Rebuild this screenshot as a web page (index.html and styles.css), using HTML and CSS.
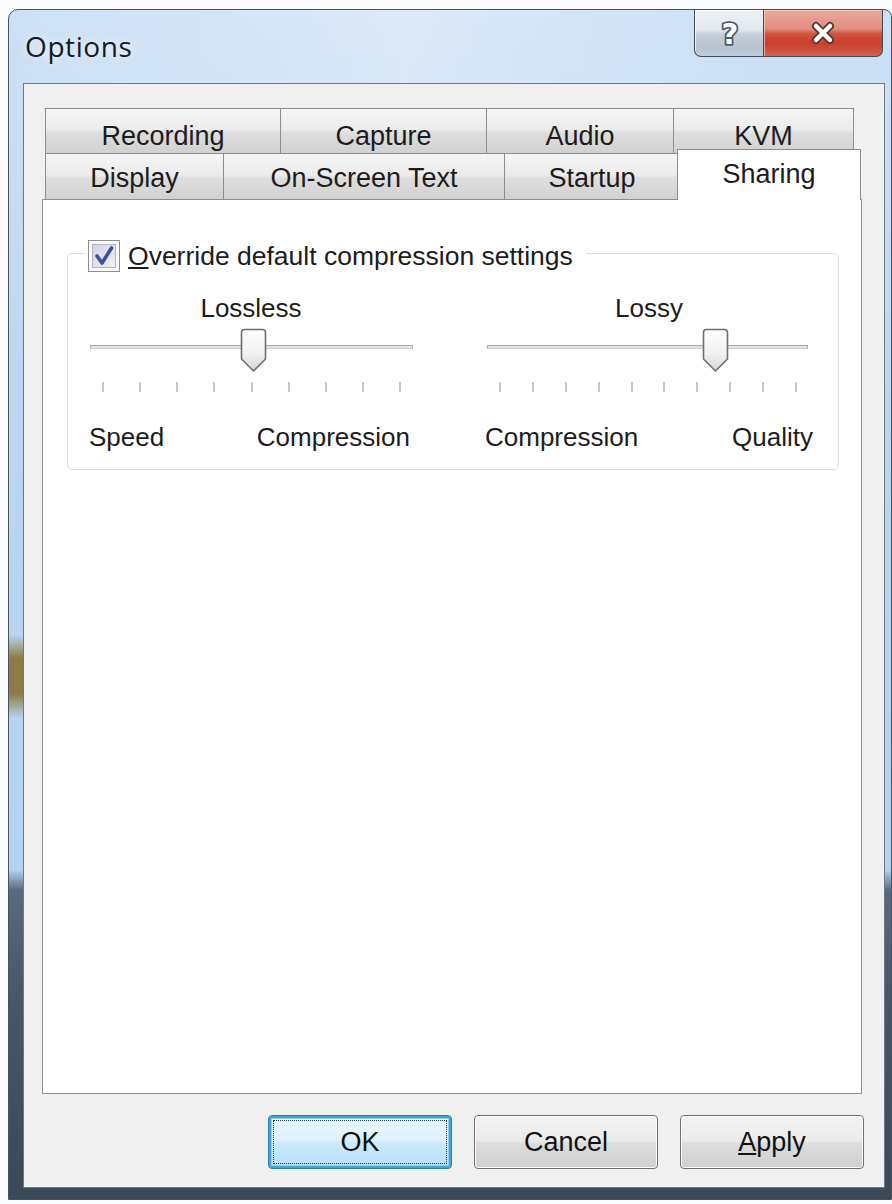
FILE: index.html
```html
<!DOCTYPE html>
<html lang="en">
<head>
<meta charset="utf-8">
<title>Options</title>
<link rel="stylesheet" href="styles.css">
</head>
<body>
<div class="window">
  <div class="titlebar">
    <div class="title">Options</div>
    <div class="caption">
      <div class="cap-btn help">
        <svg width="30" height="34" viewBox="0 0 30 34"><text x="16" y="28" text-anchor="middle" class="help-glyph">?</text></svg>
      </div>
      <div class="cap-btn close">
        <svg width="26" height="24" viewBox="0 0 26 24">
          <path d="M6 5 L20 19 M20 5 L6 19" stroke="#5b3430" stroke-width="8" stroke-linecap="round" fill="none"/>
          <path d="M6 5 L20 19 M20 5 L6 19" stroke="#ffffff" stroke-width="4.5" stroke-linecap="round" fill="none"/>
        </svg>
      </div>
    </div>
  </div>
  <div class="client">
    <div class="tabrow row1">
      <div class="tab t-recording">Recording</div>
      <div class="tab t-capture">Capture</div>
      <div class="tab t-audio">Audio</div>
      <div class="tab t-kvm">KVM</div>
    </div>
    <div class="tabrow row2">
      <div class="tab t-display">Display</div>
      <div class="tab t-onscreen">On-Screen Text</div>
      <div class="tab t-startup">Startup</div>
      <div class="tab t-sharing selected">Sharing</div>
    </div>
    <div class="panel">
      <div class="group">
        <div class="legend">
          <span class="checkbox">
            <svg width="32" height="32" viewBox="0 0 32 32">
              <defs>
                <linearGradient id="cbg" x1="0" y1="0" x2="1" y2="1">
                  <stop offset="0" stop-color="#cfd3e3"/>
                  <stop offset="1" stop-color="#f1f2f8"/>
                </linearGradient>
              </defs>
              <rect x="0.5" y="0.5" width="31" height="31" fill="#fafafa" stroke="#8e8f8f"/>
              <rect x="4.5" y="4.5" width="23" height="23" fill="url(#cbg)" stroke="#aeb4c4"/>
              <path d="M9 16 L14 23 L23.5 8" fill="none" stroke="#3a4fa4" stroke-width="3.6" stroke-linecap="round" stroke-linejoin="round"/>
            </svg>
          </span>
          <span class="legend-text"><u>O</u>verride default compression settings</span>
        </div>
        <div class="sliders">
          <div class="col col-left">
            <div class="slider-title">Lossless</div>
            <div class="slider">
              <div class="track"></div>
              <div class="ticks"><i></i><i></i><i></i><i></i><i></i><i></i><i></i><i></i><i></i></div>
              <div class="thumb" style="left:151px">
                <svg width="27" height="45" viewBox="0 0 27 45">
                  <defs>
                    <linearGradient id="tg1" x1="0" y1="0" x2="0" y2="1">
                      <stop offset="0" stop-color="#fefefe"/>
                      <stop offset="0.6" stop-color="#f0f0f0"/>
                      <stop offset="1" stop-color="#d6d6d6"/>
                    </linearGradient>
                  </defs>
                  <path d="M4.5 1.5 H22.5 Q25.5 1.5 25.5 4.5 V31 L13.5 43 L1.5 31 V4.5 Q1.5 1.5 4.5 1.5 Z" fill="url(#tg1)" stroke="#6e6e6e" stroke-width="1.6" stroke-linejoin="round"/>
                </svg>
              </div>
            </div>
            <div class="ends"><span>Speed</span><span>Compression</span></div>
          </div>
          <div class="col col-right">
            <div class="slider-title">Lossy</div>
            <div class="slider">
              <div class="track"></div>
              <div class="ticks"><i></i><i></i><i></i><i></i><i></i><i></i><i></i><i></i><i></i><i></i></div>
              <div class="thumb" style="left:217px">
                <svg width="27" height="45" viewBox="0 0 27 45">
                  <defs>
                    <linearGradient id="tg2" x1="0" y1="0" x2="0" y2="1">
                      <stop offset="0" stop-color="#fefefe"/>
                      <stop offset="0.6" stop-color="#f0f0f0"/>
                      <stop offset="1" stop-color="#d6d6d6"/>
                    </linearGradient>
                  </defs>
                  <path d="M4.5 1.5 H22.5 Q25.5 1.5 25.5 4.5 V31 L13.5 43 L1.5 31 V4.5 Q1.5 1.5 4.5 1.5 Z" fill="url(#tg2)" stroke="#6e6e6e" stroke-width="1.6" stroke-linejoin="round"/>
                </svg>
              </div>
            </div>
            <div class="ends"><span>Compression</span><span>Quality</span></div>
          </div>
        </div>
      </div>
    </div>
    <div class="buttons">
      <button class="btn default">OK</button>
      <button class="btn">Cancel</button>
      <button class="btn"><u>A</u>pply</button>
    </div>
  </div>
</div>
</body>
</html>
```
FILE: styles.css
```css
html, body {
  margin: 0;
  padding: 0;
}

body {
  width: 892px;
  height: 1204px;
  overflow: hidden;
  background: #fbfcfd;
  font-family: "Liberation Sans", Arial, sans-serif;
  color: #1c1c1c;
}

.window {
  box-sizing: border-box;
  margin: 9px 0 0 8px;
  width: 884px;
  height: 1191px;
  border: 1px solid #46525f;
  border-radius: 10px 8px 0 0;
  padding: 0 6px 11px 14px;
  background:
    linear-gradient(to right, rgba(255,255,255,0) 0, rgba(255,255,255,0.3) 45%, rgba(255,255,255,0) 85%) left top / 100% 74px no-repeat,
    linear-gradient(to bottom, rgba(140,125,70,0) 625px, #8c7d47 648px, #8c7d47 684px, rgba(140,125,70,0) 708px) left top / 14px 100% no-repeat,
    linear-gradient(180deg, #cde0f5 0, #c9def4 120px, #bcd6f0 400px, #b4d1ef 860px, #5a6a7d 880px, #475565 1000px, #3b4856 100%);
}

/* ---------- title bar ---------- */
.titlebar {
  display: flex;
  align-items: flex-start;
  height: 73px;
}

.title {
  margin: 19px 0 0 2px;
  font-family: "Open Sans", "Liberation Sans", sans-serif;
  font-size: 28px;
  line-height: 34px;
  letter-spacing: 0.6px;
  color: #151a20;
  text-shadow: 0 0 8px rgba(255,255,255,0.9);
}

.caption {
  display: flex;
  margin-left: auto;
  margin-right: 2px;
  height: 47px;
}

.cap-btn {
  box-sizing: border-box;
  height: 47px;
  display: flex;
  align-items: center;
  justify-content: center;
  border-bottom: 1px solid #3d4a58;
}

.help {
  width: 70px;
  border-left: 1px solid #3d4a58;
  border-right: 1px solid #3d4a58;
  border-bottom-left-radius: 7px;
  background: linear-gradient(180deg, #eef2f6 0, #e2e8ef 44%, #c6cfda 52%, #b7c3d1 85%, #c3cedb 100%);
  box-shadow: inset 1px 1px 0 rgba(255,255,255,0.7);
}

.help-glyph {
  font-family: "DejaVu Sans", "Liberation Sans", sans-serif;
  font-weight: bold;
  font-size: 29px;
  fill: #ffffff;
  stroke: #4a5664;
  stroke-width: 3.5px;
  stroke-linejoin: round;
  paint-order: stroke fill;
}

.close {
  width: 120px;
  margin-left: -1px;
  border-right: 1px solid #3d4a58;
  border-left: 1px solid #3d4a58;
  border-bottom-right-radius: 7px;
  background: linear-gradient(180deg, #eaaa9d 0, #e28f7f 40%, #d2533f 52%, #c83f2d 72%, #d8614a 100%);
  box-shadow: inset 1px 1px 0 rgba(255,220,210,0.6);
}

/* ---------- client ---------- */
.client {
  box-sizing: border-box;
  width: 862px;
  height: 1105px;
  border: 1px solid #6a7888;
  background: #f0f0f0;
  padding: 24px 0 0 18px;
}

.tabrow {
  display: flex;
  margin-left: 3px;
}

.row1 {
  height: 45px;
}

.row2 {
  height: 46px;
  align-items: flex-end;
}

.tab {
  box-sizing: border-box;
  border: 1px solid #8a8d95;
  border-bottom: 0;
  background: linear-gradient(180deg, #f5f5f5 0, #ececec 46%, #dedede 54%, #d1d1d1 100%);
  font-size: 27px;
  line-height: 30px;
  color: #1c1c1c;
  text-align: center;
  white-space: nowrap;
}

.tab + .tab {
  margin-left: -1px;
}

.row1 .tab {
  height: 45px;
  padding-top: 12px;
}

.row2 .tab {
  height: 46px;
  padding-top: 9px;
}

.t-recording { width: 236px; }
.t-capture { width: 207px; }
.t-audio { width: 188px; }
.t-kvm { width: 181px; }
.t-display { width: 179px; }
.t-onscreen { width: 282px; }
.t-startup { width: 176px; }

.row2 .tab.selected {
  width: 184px;
  height: 51px;
  margin-left: -3px;
  margin-bottom: -1px;
  background: #ffffff;
  z-index: 1;
}

.panel {
  box-sizing: border-box;
  width: 820px;
  height: 895px;
  border: 1px solid #8a8d95;
  background: #ffffff;
  padding: 53px 0 0 24px;
}

/* ---------- group box ---------- */
.group {
  box-sizing: border-box;
  width: 772px;
  height: 217px;
  border: 1px solid #d8dfe4;
  border-radius: 5px;
}

.legend {
  display: flex;
  align-items: center;
  width: max-content;
  height: 34px;
  margin: -15px 0 0 16px;
  padding: 0 13px 0 4px;
  background: #ffffff;
}

.checkbox {
  display: flex;
  width: 32px;
  height: 32px;
}

.legend-text {
  margin-left: 8px;
  font-size: 26.5px;
  line-height: 30px;
}

.sliders {
  display: flex;
  gap: 72px;
  margin-left: 21px;
}

.col {
  display: flex;
  flex-direction: column;
}

.col-left { width: 324px; }
.col-right { width: 328px; }

.slider-title {
  margin-top: 20px;
  text-align: center;
  font-size: 26px;
  line-height: 30px;
}

.slider {
  position: relative;
  box-sizing: border-box;
  height: 72px;
  padding-top: 22px;
}

.track {
  box-sizing: border-box;
  height: 4px;
  border: 1px solid #a9a9a9;
  border-bottom-color: #cfcfcf;
  background: #e4e4e4;
  border-radius: 1px;
}

.col-left .track { margin-left: 1px; width: 323px; }
.col-right .track { margin-left: 2px; width: 321px; }

.ticks {
  display: flex;
  justify-content: space-between;
  margin-top: 33px;
  height: 10px;
}

.col-left .ticks { margin-left: 13px; width: 299px; }
.col-right .ticks { margin-left: 14px; width: 298px; }

.ticks i {
  width: 2px;
  height: 10px;
  background: #c6c6c6;
}

.thumb {
  position: absolute;
  top: 5px;
  width: 27px;
  height: 45px;
}

.ends {
  display: flex;
  justify-content: space-between;
  margin-top: 27px;
  font-size: 26px;
  line-height: 30px;
}

.col-left .ends { padding-right: 3px; }

/* ---------- buttons ---------- */
.buttons {
  display: flex;
  justify-content: flex-end;
  gap: 22px;
  margin: 21px 20px 0 0;
}

.btn {
  box-sizing: border-box;
  width: 184px;
  height: 54px;
  padding: 0;
  border: 1px solid #707070;
  border-radius: 4px;
  background: linear-gradient(180deg, #f3f3f3 0, #ebebeb 48%, #dddddd 52%, #cfcfcf 100%);
  box-shadow: inset 0 0 0 1px #fbfbfb;
  font-family: "Liberation Sans", Arial, sans-serif;
  font-size: 27px;
  line-height: 30px;
  color: #111111;
}

.btn.default {
  border: 1px solid #2f7cab;
  box-shadow: inset 0 0 0 2px #45a6d6, inset 0 0 0 3px #8fd0ef;
  background: linear-gradient(180deg, #ebf7fd 0, #dcf1fc 48%, #c9eafc 52%, #b3def6 100%);
  outline: 1px dotted #22323c;
  outline-offset: -6px;
}
```
